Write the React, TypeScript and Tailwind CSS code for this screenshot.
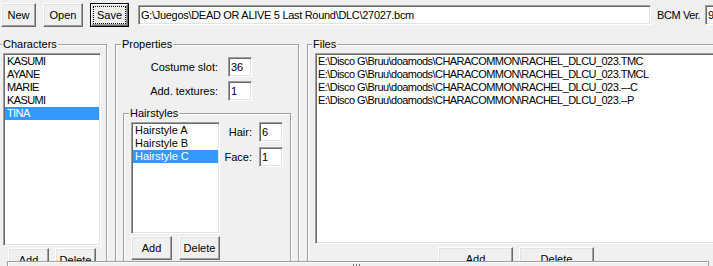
import React from "react";

const raised =
  "bg-[#f0f0f0] border border-t-white border-l-white border-r-[#696969] border-b-[#696969] shadow-[inset_-1px_-1px_0_#a0a0a0,inset_1px_1px_0_#e3e3e3]";
const sunken =
  "bg-white border border-t-[#a0a0a0] border-l-[#a0a0a0] border-r-white border-b-white shadow-[inset_1px_1px_0_#696969,inset_-1px_-1px_0_#e3e3e3]";

function Btn({ className, children }: { className: string; children: React.ReactNode }) {
  return (
    <div className={`${raised} ${className} h-[24px] shrink-0 flex items-center justify-center leading-none`}>
      {children}
    </div>
  );
}

function ListBox({
  className,
  items,
  selected,
  textClass = "",
}: {
  className: string;
  items: string[];
  selected?: number;
  textClass?: string;
}) {
  return (
    <div className={`${sunken} ${className} shrink-0 p-[1px] overflow-hidden`}>
      {items.map((it, i) => (
        <div
          key={i}
          className={`h-[13px] leading-[13px] pl-[2px] whitespace-nowrap ${textClass} ${
            i === selected ? "bg-[#3399ff] text-white" : ""
          }`}
        >
          {it}
        </div>
      ))}
    </div>
  );
}

function TextBox({ className, value, textClass = "" }: { className: string; value: string; textClass?: string }) {
  return (
    <div
      className={`${sunken} ${className} h-[20px] shrink-0 pl-[2px] flex items-center leading-none whitespace-nowrap overflow-hidden ${textClass}`}
    >
      {value}
    </div>
  );
}

export default function App() {
  return (
    <div className="w-[713px] h-[266px] bg-[#f0f0f0] overflow-hidden flex flex-col text-[11px] text-black font-['Liberation_Sans',Arial,sans-serif] select-none">
      {/* toolbar */}
      <div className="h-[38px] shrink-0 flex items-start pt-[3px]">
        <Btn className="ml-[1px] w-[35px]">New</Btn>
        <Btn className="ml-[7px] w-[40px]">Open</Btn>
        <div className="ml-[7px] w-[39px] h-[24px] shrink-0 border border-black flex">
          <div className={`${raised} flex-1 p-[1px] flex`}>
            <div className="flex-1 border border-dotted border-black flex items-center justify-center leading-none">
              Save
            </div>
          </div>
        </div>
        <TextBox
          className="ml-[9px] mt-[2px] w-[513px]"
          value="G:\Juegos\DEAD OR ALIVE 5 Last Round\DLC\27027.bcm"
          textClass="tracking-[-0.3px]"
        />
        <div className="ml-[6px] mt-[2px] w-[48px] h-[20px] shrink-0 flex items-center whitespace-nowrap tracking-[-0.4px]">
          BCM Ver.
        </div>
        <TextBox className="mt-[2px] w-[40px]" value="9" />
      </div>

      {/* main area */}
      <div className="h-[223px] shrink-0 flex items-start overflow-hidden">
        {/* Characters */}
        <div className="relative pt-[6px] w-[107px] shrink-0">
          <div className="absolute top-0 left-[2px] px-[1px] leading-[13px] bg-[#f0f0f0]">Characters</div>
          <div className="h-[250px] border-t border-r border-[#a0a0a0] shadow-[inset_0_1px_0_#fff,1px_0_0_#fff] pl-[3px] pt-[8px]">
            <ListBox
              className="w-[98px] h-[193px]"
              items={["KASUMI", "AYANE", "MARIE", "KASUMI", "TINA"]}
              selected={4}
              textClass="tracking-[-0.6px]"
            />
            <div className="flex mt-[2px] ml-[5px] gap-[6px]">
              <Btn className="w-[41px]">Add</Btn>
              <Btn className="w-[41px]">Delete</Btn>
            </div>
          </div>
        </div>

        {/* Properties */}
        <div className="relative pt-[6px] ml-[8px] w-[184px] shrink-0">
          <div className="absolute top-0 left-[6px] px-[1px] leading-[13px] bg-[#f0f0f0]">Properties</div>
          <div className="h-[250px] border border-[#a0a0a0] shadow-[inset_1px_1px_0_#fff,1px_1px_0_#fff] pt-[12px]">
            <div className="flex items-center h-[20px]">
              <div className="w-[102px] text-right whitespace-nowrap">Costume slot:</div>
              <TextBox className="ml-[10px] w-[24px]" value="36" />
            </div>
            <div className="flex items-center h-[20px] mt-[4px]">
              <div className="w-[102px] text-right whitespace-nowrap">Add. textures:</div>
              <TextBox className="ml-[10px] w-[24px]" value="1" />
            </div>

            {/* Hairstyles */}
            <div className="relative pt-[6px] mt-[6px] mx-[7px]">
              <div className="absolute top-0 left-[6px] px-[1px] leading-[13px] bg-[#f0f0f0]">Hairstyles</div>
              <div className="h-[200px] border border-[#a0a0a0] shadow-[inset_1px_1px_0_#fff,1px_1px_0_#fff] pl-[7px] pt-[8px]">
                <div className="flex items-start">
                  <ListBox
                    className="w-[89px] h-[112px]"
                    items={["Hairstyle A", "Hairstyle B", "Hairstyle C"]}
                    selected={2}
                  />
                  <div className="flex flex-col">
                    <div className="flex items-center h-[20px]">
                      <div className="w-[32px] text-right">Hair:</div>
                      <TextBox className="ml-[7px] w-[24px]" value="6" />
                    </div>
                    <div className="flex items-center h-[20px] mt-[5px]">
                      <div className="w-[32px] text-right">Face:</div>
                      <TextBox className="ml-[7px] w-[24px]" value="1" />
                    </div>
                  </div>
                </div>
                <div className="flex mt-[2px] gap-[7px]">
                  <Btn className="w-[41px]">Add</Btn>
                  <Btn className="w-[41px]">Delete</Btn>
                </div>
              </div>
            </div>
          </div>
        </div>

        {/* Files */}
        <div className="relative pt-[6px] ml-[8px] w-[500px] shrink-0">
          <div className="absolute top-0 left-[5px] px-[1px] leading-[13px] bg-[#f0f0f0]">Files</div>
          <div className="h-[250px] border border-[#a0a0a0] shadow-[inset_1px_1px_0_#fff,1px_1px_0_#fff] pl-[7px] pt-[8px]">
            <ListBox
              className="w-[480px] h-[191px]"
              items={[
                "E:\\Disco G\\Bruu\\doamods\\CHARACOMMON\\RACHEL_DLCU_023.TMC",
                "E:\\Disco G\\Bruu\\doamods\\CHARACOMMON\\RACHEL_DLCU_023.TMCL",
                "E:\\Disco G\\Bruu\\doamods\\CHARACOMMON\\RACHEL_DLCU_023.---C",
                "E:\\Disco G\\Bruu\\doamods\\CHARACOMMON\\RACHEL_DLCU_023.--P",
              ]}
              textClass="tracking-[-0.55px] !pl-[1px]"
            />
            <div className="flex mt-[3px] ml-[123px] gap-[6px]">
              <Btn className="w-[75px]">Add</Btn>
              <Btn className="w-[75px]">Delete</Btn>
            </div>
          </div>
        </div>
      </div>

      {/* bottom bar */}
      <div className="h-[5px] shrink-0 ml-[7px] w-[702px] border-t border-l border-r border-[#a0a0a0] shadow-[inset_1px_1px_0_#fff] flex justify-center items-end">
        <svg width="9" height="2" viewBox="0 0 9 2" className="mr-[4px]">
          <rect x="1" y="0" width="1" height="2" fill="#6d6d6d" />
          <rect x="4" y="0" width="1" height="2" fill="#6d6d6d" />
          <rect x="7" y="0" width="1" height="2" fill="#6d6d6d" />
        </svg>
      </div>
    </div>
  );
}
